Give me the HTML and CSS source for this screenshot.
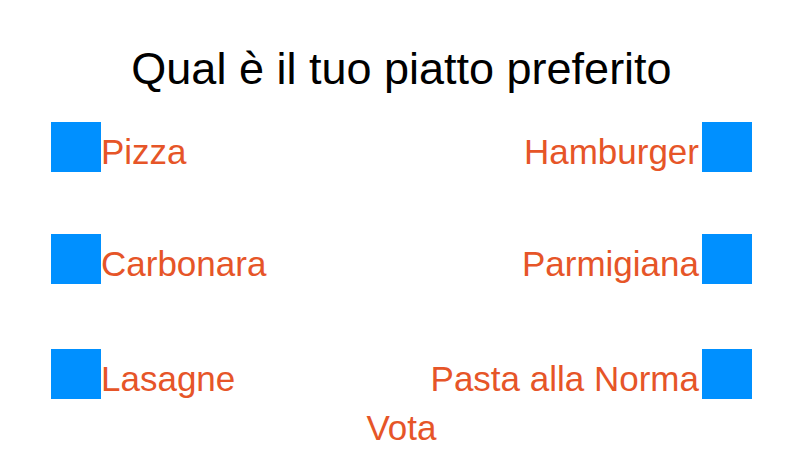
FILE: index.html
```html
<!DOCTYPE html>
<html lang="it">
<head>
<meta charset="utf-8">
<title>Sondaggio</title>
<link rel="stylesheet" href="styles.css">
</head>
<body>
<form class="poll">
  <h1 class="title" id="question">Qual è il tuo piatto preferito</h1>
  <div class="options" role="radiogroup" aria-labelledby="question">
    <label class="option"><input class="box" type="radio" name="dish" value="pizza">Pizza</label>
    <label class="option option-end"><input class="box" type="radio" name="dish" value="hamburger">Hamburger</label>
    <label class="option"><input class="box" type="radio" name="dish" value="carbonara">Carbonara</label>
    <label class="option option-end"><input class="box" type="radio" name="dish" value="parmigiana">Parmigiana</label>
    <label class="option"><input class="box" type="radio" name="dish" value="lasagne">Lasagne</label>
    <label class="option option-end"><input class="box" type="radio" name="dish" value="norma">Pasta alla Norma</label>
  </div>
  <button class="vote" type="submit">Vota</button>
</form>
</body>
</html>
```
FILE: styles.css
```css
* {
  box-sizing: border-box;
}

body {
  margin: 0;
  background: #fff;
  color: #000;
  font-family: "Liberation Sans", Arial, sans-serif;
}

.poll {
  display: flex;
  flex-direction: column;
  padding: 44px 48px 0 51px;
}

.title {
  margin: 0 0 28px;
  font-size: 45px;
  font-weight: 400;
  line-height: 50px;
  text-align: center;
}

.options {
  display: grid;
  grid-template-rows: 112px 115px 50px;
  grid-template-columns: auto auto;
  justify-content: space-between;
  align-items: start;
}

.option {
  display: flex;
  align-items: center;
  height: 50px;
  padding-top: 10px;
  color: #e65528;
  font-size: 35px;
  line-height: 40px;
}

.option-end {
  flex-direction: row-reverse;
  gap: 3px;
}

.box {
  appearance: none;
  flex: none;
  width: 50px;
  height: 50px;
  margin: -10px 0 0;
  background: #0090ff;
}

.box:checked {
  background: #0060c0;
}

.vote {
  align-self: center;
  margin-top: 9px;
  padding: 0;
  border: 0;
  background: none;
  color: #e65528;
  font: inherit;
  font-size: 35px;
  line-height: 40px;
}
```
